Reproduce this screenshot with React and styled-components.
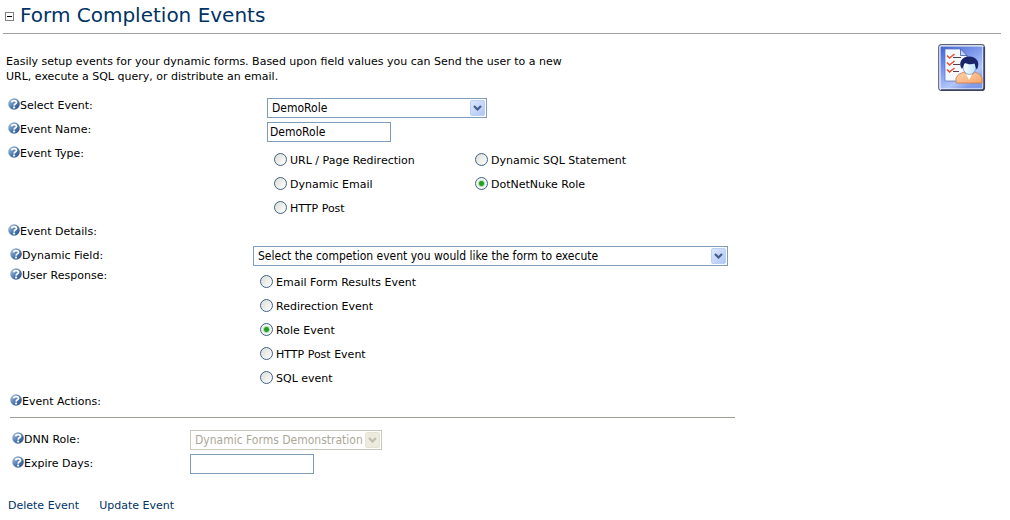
import React, { useState } from "react";
import styled, { createGlobalStyle } from "styled-components";

const GlobalStyle = createGlobalStyle`
  * { box-sizing: border-box; }
  body {
    margin: 0;
    background: #fff;
    color: #000;
    font: 11px/16px Verdana, "DejaVu Sans", sans-serif;
  }
`;

const Page = styled.main`
  padding: 0 9px 6px 3px;
`;

const Header = styled.header`
  display: flex;
  align-items: center;
  gap: 6px;
  height: 34px;
  padding: 0 2px 4px;
  border-bottom: 1px solid #a0a0a0;
`;

const Collapse = styled.button`
  display: grid;
  place-items: center;
  width: 9px;
  height: 9px;
  margin-top: 4px;
  padding: 0;
  border: 1px solid #808080;
  background: #fff;

  &::before {
    content: "";
    width: 5px;
    height: 1px;
    background: #000;
  }
`;

const Title = styled.h1`
  margin: 0;
  color: #003366;
  font-size: 20px;
  font-weight: 400;
  line-height: 28px;
`;

const Intro = styled.section`
  display: flex;
  justify-content: space-between;
  align-items: flex-start;
  min-height: 64px;
  padding: 10px 15px 0 3px;
`;

const IntroText = styled.p`
  max-width: 580px;
  margin: 0;
  padding-top: 10px;
  line-height: 15px;
`;

const Form = styled.form`
  margin: 0;
`;

const Row = styled.div`
  display: grid;
  grid-template-columns: ${(p) => p.$label}px minmax(0, 1fr);
  align-items: ${(p) => p.$align || "start"};
  min-height: ${(p) => p.$height || 24}px;
  padding-left: ${(p) => p.$indent || 5}px;
`;

const LabelBox = styled.div`
  display: flex;
  align-items: flex-start;
  height: 16px;

  svg { flex: none; }
`;

const Choices = styled.div`
  display: grid;
  grid-template-columns: ${(p) => (p.$columns === 2 ? "201px 1fr" : "1fr")};
  grid-auto-rows: 24px;
  align-items: center;
  padding: 3px 0 0 7px;
`;

const Choice = styled.label`
  display: flex;
  align-items: center;
  gap: 3px;
`;

const Radio = styled.input.attrs({ type: "radio" })`
  appearance: none;
  flex: none;
  width: 13px;
  height: 13px;
  margin: 0 0 3px;
  border: 1px solid #3c6288;
  border-radius: 50%;
  background: linear-gradient(135deg, #dcdcd7, #fff);

  &:checked {
    background: radial-gradient(circle, #21a121 0 2px, #b5dfb5 3px, #f4f4f0 4px);
  }
`;

const SelectBox = styled.div`
  position: relative;
  width: ${(p) => p.$width}px;
  max-width: 100%;
  height: 20px;

  svg {
    position: absolute;
    top: 2px;
    right: 2px;
    pointer-events: none;
  }
`;

const Select = styled.select`
  appearance: none;
  display: block;
  width: 100%;
  height: 20px;
  margin: 0;
  padding: 0 18px 0 4px;
  border: 1px solid #7f9db9;
  border-radius: 0;
  background: #fff;
  color: #000;
  font: 12px/18px Tahoma, "DejaVu Sans Condensed", sans-serif;

  &:disabled {
    border-color: #c9c7ba;
    background: #fff;
    color: #aca899;
    opacity: 1;
  }
`;

const TextInput = styled.input.attrs({ type: "text" })`
  display: block;
  width: 124px;
  height: 20px;
  margin: 0;
  padding: 0 2px;
  border: 1px solid #7f9db9;
  background: #fff;
  color: #000;
  font: 12px/18px Tahoma, "DejaVu Sans Condensed", sans-serif;
`;

const Divider = styled.hr`
  width: 725px;
  max-width: 100%;
  height: 1px;
  margin: 4px 0 10px 7px;
  border: 0;
  background: #a09f97;
`;

const Actions = styled.nav`
  display: flex;
  gap: 20px;
  padding: 22px 5px 0;
`;

const ActionLink = styled.a`
  color: #003366;
  text-decoration: none;
`;

function HelpIcon() {
  return (
    <svg width="12" height="14" viewBox="0 0 12 14" aria-hidden="true">
      <defs>
        <linearGradient id="help" x1="0" y1="0" x2="1" y2="1">
          <stop offset="0" stopColor="#b4cce6" />
          <stop offset="0.5" stopColor="#5580b4" />
          <stop offset="1" stopColor="#1f4780" />
        </linearGradient>
      </defs>
      <circle cx="6" cy="6" r="5.8" fill="url(#help)" />
      <path d="M3.6 4.4C3.8 2 8.6 1.9 8.5 4.4C8.4 5.9 6.2 5.7 6.1 7.6" fill="none" stroke="#fff" strokeWidth="1.8" />
      <rect x="5.1" y="8.6" width="2" height="1.8" fill="#fff" />
    </svg>
  );
}

function ArrowIcon({ disabled }) {
  return (
    <svg width="15" height="16" viewBox="0 0 15 16" aria-hidden="true">
      <defs>
        <linearGradient id="arrow" x1="0" y1="0" x2="1" y2="1">
          <stop offset="0" stopColor="#dfe9fe" />
          <stop offset="1" stopColor="#aec5f5" />
        </linearGradient>
      </defs>
      <rect x="0.5" y="0.5" width="14" height="15" rx="1.5" fill={disabled ? "#edebdd" : "url(#arrow)"} stroke={disabled ? "#e4e2d4" : "#bccff7"} />
      <path d="M4 6L7.5 9.5L11 6" fill="none" stroke={disabled ? "#bfbdae" : "#435d8c"} strokeWidth="2.2" />
    </svg>
  );
}

function FormUserIcon() {
  return (
    <svg width="48" height="48" viewBox="0 0 48 48" role="img" aria-label="Dynamic forms">
      <defs>
        <linearGradient id="tile" x1="0" y1="0" x2="0.6" y2="1">
          <stop offset="0" stopColor="#3f63d2" />
          <stop offset="0.45" stopColor="#7d9aec" />
          <stop offset="0.8" stopColor="#b3c6fa" />
          <stop offset="1" stopColor="#7f9bea" />
        </linearGradient>
        <linearGradient id="shirt" x1="0" y1="0" x2="1" y2="1">
          <stop offset="0" stopColor="#ffd6b0" />
          <stop offset="1" stopColor="#f6a468" />
        </linearGradient>
        <linearGradient id="face" x1="0" y1="0" x2="1" y2="0">
          <stop offset="0" stopColor="#fff" />
          <stop offset="1" stopColor="#b9e2fa" />
        </linearGradient>
      </defs>
      <rect x="0.7" y="0.7" width="45.6" height="45.6" rx="2.5" fill="#fff" stroke="#5b6383" strokeWidth="1.2" />
      <path d="M46.2 3V43.5Q46.2 46.2 43.5 46.2H3" fill="none" stroke="#3a4365" strokeWidth="1.8" />
      <rect x="2.5" y="2.5" width="42" height="42" fill="url(#tile)" />
      <path d="M7 5H23L29 11V37H7Z" fill="#f6f8ff" stroke="#5570bf" strokeWidth="0.7" />
      <path d="M22.5 5V11.5H29Z" fill="#c6d2f6" stroke="#3d57a8" strokeWidth="0.8" />
      <path d="M15 13.5H23M15 20.5H22M15 27.5H21" stroke="#5a3c45" strokeWidth="1.2" />
      <path d="M9 11.5L11.5 14L16.5 10M9 18.5L11.5 21L16.5 17M9 25.5L11.5 28L16.5 24" fill="none" stroke="#e4552f" strokeWidth="1.6" />
      <path d="M18 39V34Q19 30 26 28L31 33L37 28Q43 30 44 34V39Z" fill="url(#shirt)" stroke="#d37a42" strokeWidth="0.8" />
      <path d="M26.5 27L31 36L36 27Z" fill="#fff" />
      <ellipse cx="31.5" cy="23" rx="6.5" ry="7.5" fill="url(#face)" stroke="#6b86be" strokeWidth="0.7" />
      <path d="M24 25C19.5 19 24 12.5 31 12.5C38.5 12.5 42.5 18 39 25.5C37.5 24.5 37.5 22 36.5 19.5C33 21 29 20 27 19C25.5 20.5 25.5 23 24 25Z" fill="#1b2468" />
    </svg>
  );
}

function HelpLabel({ htmlFor, id, children }) {
  return (
    <LabelBox>
      <HelpIcon />
      {htmlFor ? <label htmlFor={htmlFor}>{children}</label> : <span id={id}>{children}</span>}
    </LabelBox>
  );
}

function SelectField({ id, width, disabled, options }) {
  return (
    <SelectBox $width={width}>
      <Select id={id} disabled={disabled}>
        {options.map((option) => (
          <option key={option}>{option}</option>
        ))}
      </Select>
      <ArrowIcon disabled={disabled} />
    </SelectBox>
  );
}

function RadioGroup({ name, labelledBy, columns, options, initial }) {
  const [value, setValue] = useState(initial);
  return (
    <Choices role="radiogroup" aria-labelledby={labelledBy} $columns={columns}>
      {options.map((option) => (
        <Choice key={option}>
          <Radio name={name} checked={value === option} onChange={() => setValue(option)} />
          {option}
        </Choice>
      ))}
    </Choices>
  );
}

const eventTypes = [
  "URL / Page Redirection",
  "Dynamic SQL Statement",
  "Dynamic Email",
  "DotNetNuke Role",
  "HTTP Post",
];

const responses = [
  "Email Form Results Event",
  "Redirection Event",
  "Role Event",
  "HTTP Post Event",
  "SQL event",
];

export default function App() {
  return (
    <Page>
      <GlobalStyle />
      <Header>
        <Collapse type="button" aria-label="Collapse section" />
        <Title>Form Completion Events</Title>
      </Header>
      <Intro>
        <IntroText>
          Easily setup events for your dynamic forms. Based upon field values you can Send the user to a new
          URL, execute a SQL query, or distribute an email.
        </IntroText>
        <FormUserIcon />
      </Intro>
      <Form onSubmit={(e) => e.preventDefault()}>
        <Row $label={259}>
          <HelpLabel htmlFor="event">Select Event:</HelpLabel>
          <SelectField id="event" width={220} options={["DemoRole"]} />
        </Row>
        <Row $label={259}>
          <HelpLabel htmlFor="name">Event Name:</HelpLabel>
          <TextInput id="name" defaultValue="DemoRole" />
        </Row>
        <Row $label={259}>
          <HelpLabel id="type">Event Type:</HelpLabel>
          <RadioGroup name="type" labelledBy="type" columns={2} options={eventTypes} initial="DotNetNuke Role" />
        </Row>
        <Row $label={259} $align="center" $height={22}>
          <HelpLabel>Event Details:</HelpLabel>
        </Row>
        <Row $label={243} $indent={7} $align="center" $height={25}>
          <HelpLabel htmlFor="field">Dynamic Field:</HelpLabel>
          <SelectField
            id="field"
            width={475}
            options={["Select the competion event you would like the form to execute"]}
          />
        </Row>
        <Row $label={243} $indent={7}>
          <HelpLabel id="response">User Response:</HelpLabel>
          <RadioGroup name="response" labelledBy="response" options={responses} initial="Role Event" />
        </Row>
        <Row $label={243} $indent={7} $align="center" $height={22}>
          <HelpLabel>Event Actions:</HelpLabel>
        </Row>
        <Divider />
        <Row $label={178} $indent={9} $align="center">
          <HelpLabel htmlFor="role">DNN Role:</HelpLabel>
          <SelectField id="role" width={192} disabled options={["Dynamic Forms Demonstration"]} />
        </Row>
        <Row $label={178} $indent={9} $align="center">
          <HelpLabel htmlFor="days">Expire Days:</HelpLabel>
          <TextInput id="days" />
        </Row>
        <Actions aria-label="Event actions">
          <ActionLink href="#delete">Delete Event</ActionLink>
          <ActionLink href="#update">Update Event</ActionLink>
        </Actions>
      </Form>
    </Page>
  );
}
